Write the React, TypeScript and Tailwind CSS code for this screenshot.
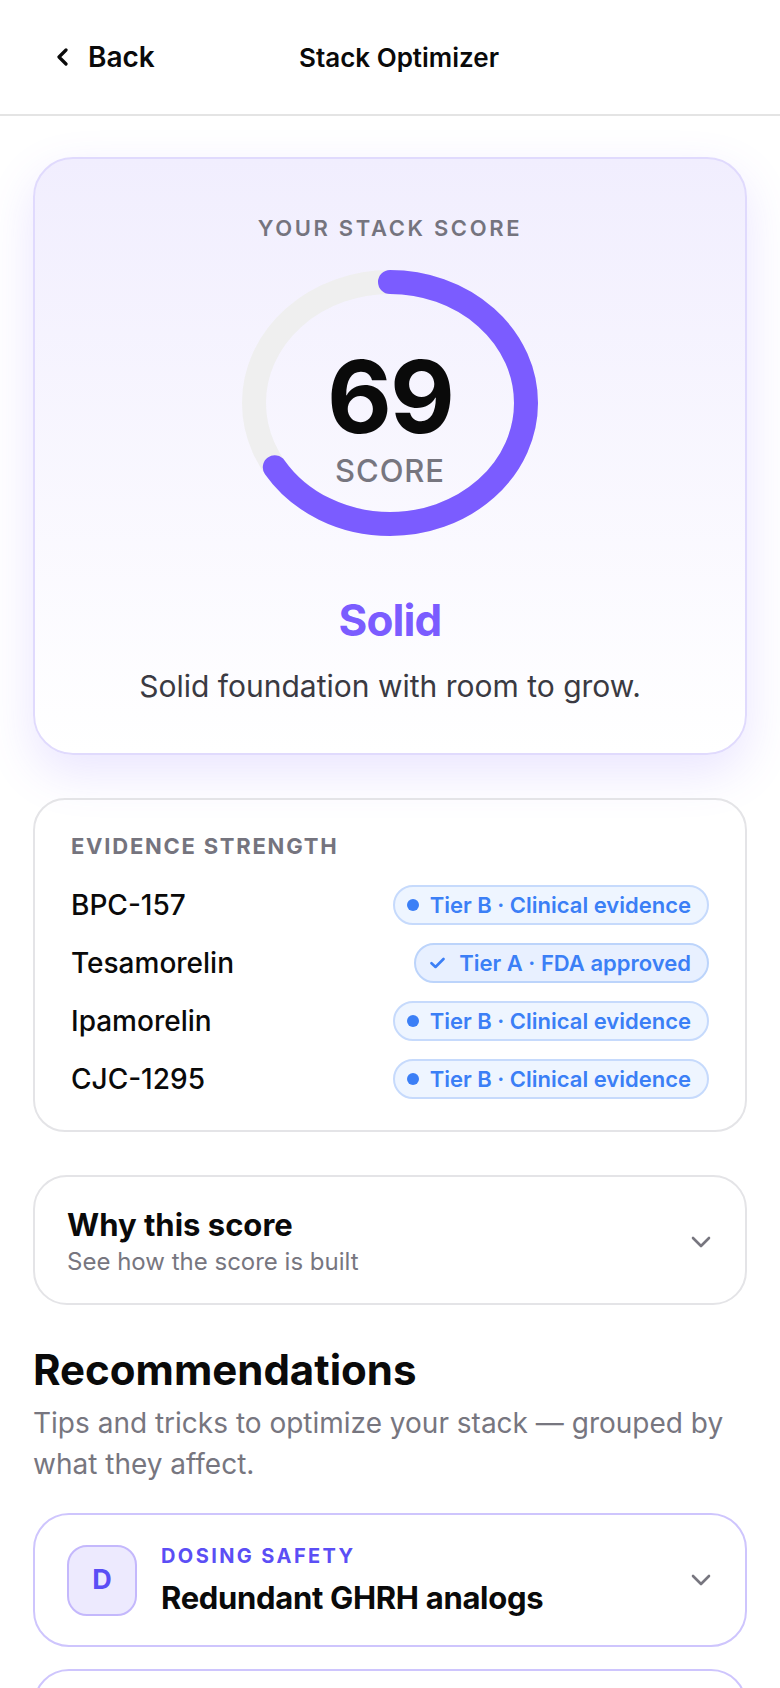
import React from "react";

const ChevronDown = () => (
  <svg width="20" height="12" viewBox="0 0 20 12" fill="none" className="shrink-0">
    <path d="M2 2 L10 10 L18 2" stroke="#77767f" strokeWidth="2.6" strokeLinecap="round" strokeLinejoin="round" />
  </svg>
);

const Ring = ({ value }: { value: number }) => {
  const cx = 148;
  const cy = 133;
  const rx = 136;
  const ry = 121;
  const d = `M ${cx} ${cy - ry} A ${rx} ${ry} 0 1 1 ${cx} ${cy + ry} A ${rx} ${ry} 0 1 1 ${cx} ${cy - ry}`;
  return (
    <svg width="296" height="266" viewBox="0 0 296 266" className="absolute inset-0">
      <path d={d} fill="none" stroke="#efefef" strokeWidth="24" />
      <path
        d={d}
        fill="none"
        stroke="#7b5cff"
        strokeWidth="24"
        strokeLinecap="round"
        pathLength={100}
        strokeDasharray={`${value} 100`}
      />
    </svg>
  );
};

type Tier = { name: string; tier: "A" | "B" };
const rows: Tier[] = [
  { name: "BPC-157", tier: "B" },
  { name: "Tesamorelin", tier: "A" },
  { name: "Ipamorelin", tier: "B" },
  { name: "CJC-1295", tier: "B" },
];

const Pill = ({ tier }: { tier: "A" | "B" }) =>
  tier === "B" ? (
    <div className="flex h-[40px] items-center gap-[11px] rounded-full border-2 border-[#c6dafc] bg-[#eef5ff] pl-[12px] pr-[16px] text-[22px] font-semibold text-[#3b7ff6]">
      <span className="h-[12px] w-[12px] rounded-full bg-[#3b7ff6]" />
      <span>Tier B · Clinical evidence</span>
    </div>
  ) : (
    <div className="flex h-[40px] items-center gap-[14px] rounded-full border-2 border-[#bcd4fb] bg-[#e8f0ff] pl-[14px] pr-[16px] text-[22px] font-semibold text-[#3b7ff6]">
      <svg width="15" height="12" viewBox="0 0 15 12" fill="none">
        <path d="M1.5 6.2 L5.5 10 L13.5 2" stroke="#3b7ff6" strokeWidth="2.6" strokeLinecap="round" strokeLinejoin="round" />
      </svg>
      <span>Tier A · FDA approved</span>
    </div>
  );

const RecCard = ({ letter, category, title }: { letter: string; category: string; title: string }) => (
  <div className="flex items-center rounded-[36px] border-2 border-[#cec5fd] bg-white py-[29px] pl-8 pr-[34px]">
    <div className="flex h-[71px] w-[70px] shrink-0 items-center justify-center rounded-[20px] border-2 border-[#c4b8fc] bg-[#edeafe] text-[27px] font-bold text-[#5b4ef5]">
      {letter}
    </div>
    <div className="ml-[24px] flex min-w-0 flex-1 flex-col">
      <span className="text-[20px] font-bold leading-[24px] tracking-[0.12em] text-[#5b4ef5]">{category}</span>
      <span className="mt-[12px] text-[31px] font-bold leading-[36px] tracking-[-0.01em] text-[#0a0a0a]">{title}</span>
    </div>
    <ChevronDown />
  </div>
);

export default function App() {
  return (
    <div className="min-h-screen bg-white font-['Inter','Noto_Sans',sans-serif] text-[#0a0a0a]">
      <header className="grid h-[116px] grid-cols-[1fr_auto_1fr] items-center border-b-2 border-[#e4e4e4] pl-[56px] pr-[38px]">
        <div className="flex items-center gap-[20px]">
          <svg width="12" height="18" viewBox="0 0 12 18" fill="none">
            <path d="M10 2 L3 9 L10 16" stroke="#0a0a0a" strokeWidth="3.2" strokeLinecap="round" strokeLinejoin="round" />
          </svg>
          <span className="text-[28px] font-semibold">Back</span>
        </div>
        <h1 className="text-[26px] font-semibold">Stack Optimizer</h1>
        <div />
      </header>

      <main className="px-[33px] pt-[41px] pb-10">
        <section className="flex flex-col items-center rounded-[40px] border-2 border-[#e0dafd] bg-linear-to-b from-[#f1eefe] to-white pt-[56px] pb-[48px] shadow-[0_18px_48px_rgba(124,92,255,0.16)]">
          <div className="text-[22px] font-semibold leading-[26px] tracking-[0.12em] text-[#75747e]">YOUR STACK SCORE</div>
          <div className="relative mt-[29px] h-[266px] w-[296px]">
            <Ring value={66.5} />
            <div className="absolute inset-0 flex flex-col items-center pt-[77px]">
              <span className="text-[100px] font-bold leading-none tracking-[-0.02em] text-[#0a0a0a]">69</span>
              <span className="mt-[8px] text-[31px] font-medium leading-none tracking-[0.03em] text-[#77767f]">SCORE</span>
            </div>
          </div>
          <div className="mt-[62px] text-[44px] font-bold leading-none tracking-[-0.02em] text-[#7b5cff]">Solid</div>
          <p className="mt-[25px] text-[30px] leading-[38px] text-[#3a3a42]">Solid foundation with room to grow.</p>
        </section>

        <section className="mt-[43px] rounded-[32px] border-2 border-[#e4e4e7] px-9 pt-[33px] pb-[31px]">
          <div className="text-[22px] font-bold leading-[26px] tracking-[0.08em] text-[#75747e]">EVIDENCE STRENGTH</div>
          <div className="mt-[26px] flex flex-col gap-[18px]">
            {rows.map((r) => (
              <div key={r.name} className="flex h-[40px] items-center justify-between">
                <span className="text-[28px] font-medium">{r.name}</span>
                <Pill tier={r.tier} />
              </div>
            ))}
          </div>
        </section>

        <section className="mt-[43px] flex items-center justify-between rounded-[34px] border-2 border-[#e4e4e7] pt-[30px] pb-[26px] pl-8 pr-[34px]">
          <div className="flex flex-col">
            <span className="text-[31px] font-bold leading-[36px]">Why this score</span>
            <span className="mt-[4px] text-[24px] leading-[30px] text-[#77767f]">See how the score is built</span>
          </div>
          <ChevronDown />
        </section>

        <h2 className="mt-[40px] text-[42px] font-bold leading-[49px]">Recommendations</h2>
        <p className="mt-[9px] text-[28px] leading-[41px] text-[#77767f]">
          Tips and tricks to optimize your stack — grouped by what they affect.
        </p>

        <div className="mt-[28px] flex flex-col gap-[22px]">
          <RecCard letter="D" category="DOSING SAFETY" title="Redundant GHRH analogs" />
          <RecCard letter="T" category="TIMING" title="Separate GH secretagogue doses" />
        </div>
      </main>
    </div>
  );
}
